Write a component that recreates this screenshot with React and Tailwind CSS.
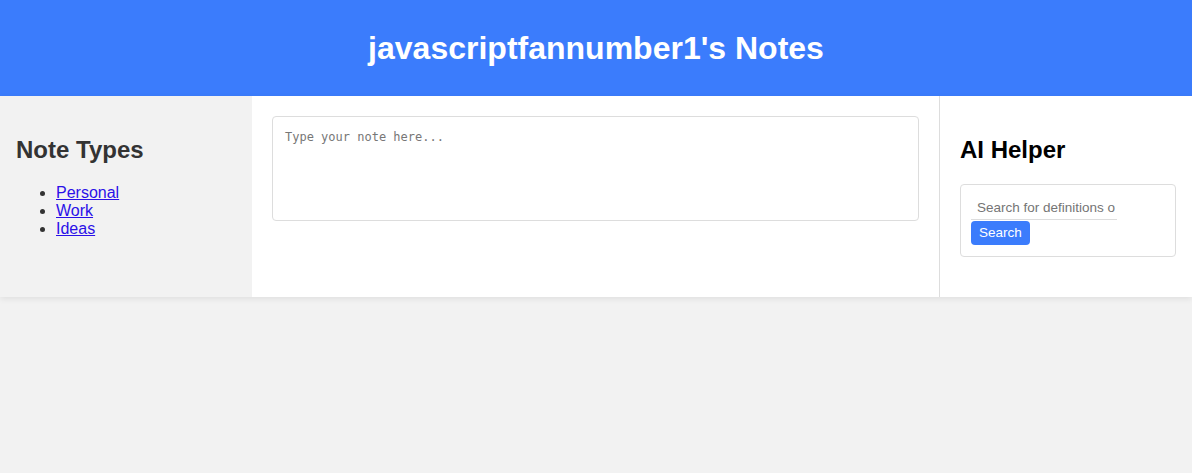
export default function App() {
  return (
    <div className="min-h-screen w-full bg-[#f2f2f2] font-['Liberation_Sans',Arial,sans-serif] text-[#333]">
      <header className="flex h-[96px] items-center justify-center bg-[#3b7cfc] shadow-[0_1px_3px_rgba(0,0,0,0.15)]">
        <h1 className="text-[32px] font-bold text-white">javascriptfannumber1's Notes</h1>
      </header>

      <main className="flex h-[201px] shadow-[0_2px_6px_rgba(0,0,0,0.08)]">
        {/* Sidebar */}
        <aside className="w-[252px] shrink-0 bg-[#f2f2f2] px-4 pt-[40px]">
          <h2 className="text-[24px] font-bold leading-[28px] text-[#333]">Note Types</h2>
          <ul className="mt-[20px] list-disc pl-10 text-[16px] leading-[18px]">
            <li><a href="#" className="text-[#2a10e8] underline">Personal</a></li>
            <li><a href="#" className="text-[#2a10e8] underline">Work</a></li>
            <li><a href="#" className="text-[#2a10e8] underline">Ideas</a></li>
          </ul>
        </aside>

        {/* Editor */}
        <section className="flex-1 bg-white p-5">
          <textarea
            placeholder="Type your note here..."
            className="block h-[105px] w-full resize-none rounded border border-[#ddd] px-3 py-[11px] font-['DejaVu_Sans_Mono',monospace] text-[12px] text-[#333] placeholder:text-[#777] outline-none"
          />
        </section>

        {/* AI helper */}
        <aside className="w-[253px] shrink-0 border-l border-[#ddd] bg-white pl-5 pr-4 pt-[40px]">
          <h2 className="text-[24px] font-bold leading-[28px] text-black">AI Helper</h2>
          <div className="mt-5 rounded border border-[#ddd] px-[10px] pb-[11px] pt-[11px]">
            <input
              type="text"
              placeholder="Search for definitions or"
              className="block h-[24px] w-[146px] border-b border-[#ddd] pl-[6px] pr-[2px] text-[13.5px] text-[#333] placeholder:text-[#757575] outline-none"
            />
            <button className="mt-px block h-[24px] rounded bg-[#3b7cfc] px-2 text-[13.5px] text-white">
              Search
            </button>
          </div>
        </aside>
      </main>
    </div>
  );
}
